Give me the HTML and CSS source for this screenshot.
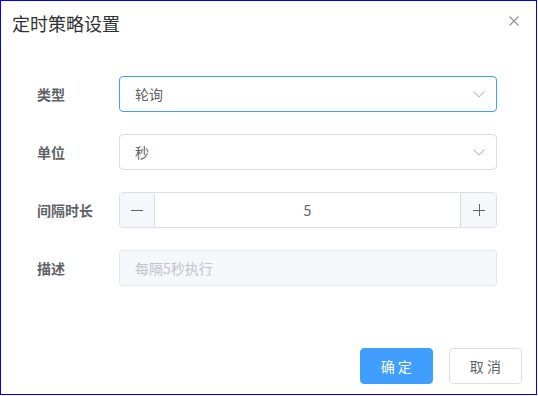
FILE: index.html
```html
<!DOCTYPE html>
<html lang="zh-CN">
<head>
    <meta charset="UTF-8">
    <meta name="viewport" content="width=device-width, initial-scale=1.0">
    <title>定时策略设置</title>
    <link rel="stylesheet" href="styles.css">
</head>
<body>
    <div class="dialog">
        <header class="dialog-header">
            <span class="dialog-title">定时策略设置</span>
            <button class="close-btn" aria-label="关闭">
                <svg width="10" height="10" viewBox="0 0 10 10">
                    <path d="M0.5 0.5 L9.5 9.5 M9.5 0.5 L0.5 9.5" stroke="#909399" stroke-width="1.2" fill="none"/>
                </svg>
            </button>
        </header>

        <div class="form">
            <div class="form-row">
                <label class="form-label">类型</label>
                <div class="select is-focus">
                    <span>轮询</span>
                    <svg class="arrow" width="12" height="7" viewBox="0 0 12 7">
                        <path d="M0.5 0.5 L6 6 L11.5 0.5" stroke="#c0c4cc" stroke-width="1.2" fill="none"/>
                    </svg>
                </div>
            </div>

            <div class="form-row">
                <label class="form-label">单位</label>
                <div class="select">
                    <span>秒</span>
                    <svg class="arrow" width="12" height="7" viewBox="0 0 12 7">
                        <path d="M0.5 0.5 L6 6 L11.5 0.5" stroke="#c0c4cc" stroke-width="1.2" fill="none"/>
                    </svg>
                </div>
            </div>

            <div class="form-row">
                <label class="form-label">间隔时长</label>
                <div class="input-number">
                    <span class="step step-minus">
                        <svg width="12" height="12" viewBox="0 0 12 12">
                            <path d="M0 6.5 H12" stroke="#606266" stroke-width="1"/>
                        </svg>
                    </span>
                    <span class="number-value">5</span>
                    <span class="step step-plus">
                        <svg width="12" height="12" viewBox="0 0 12 12">
                            <path d="M0 6.5 H12 M6.5 0 V12" stroke="#606266" stroke-width="1"/>
                        </svg>
                    </span>
                </div>
            </div>

            <div class="form-row">
                <label class="form-label">描述</label>
                <div class="text-input is-disabled">每隔5秒执行</div>
            </div>
        </div>

        <footer class="dialog-footer">
            <button class="btn btn-primary">确 定</button>
            <button class="btn btn-default">取 消</button>
        </footer>
    </div>
</body>
</html>
```

FILE: styles.css
```css
* {
    margin: 0;
    padding: 0;
    box-sizing: border-box;
    font-family: "Noto Sans CJK SC", "Noto Sans", sans-serif;
}

body {
    background: white;
}

.dialog {
    width: 537px;
    height: 395px;
    border: 1px solid #0000ff;
    display: flex;
    flex-direction: column;
    background: white;
}

.dialog-header {
    display: flex;
    align-items: flex-start;
    justify-content: space-between;
    padding: 10px 17px 0 11px;
}

.dialog-title {
    font-size: 18px;
    line-height: 24px;
    color: #303133;
}

.close-btn {
    background: none;
    border: none;
    margin-top: 5px;
    width: 10px;
    height: 10px;
    display: flex;
    cursor: pointer;
}

.form {
    display: flex;
    flex-direction: column;
    gap: 22px;
    padding: 41px 39px 0 36px;
}

.form-row {
    display: flex;
    align-items: center;
    height: 36px;
}

.form-label {
    width: 82px;
    font-size: 14px;
    font-weight: bold;
    color: #606266;
}

.select,
.text-input {
    flex: 1;
    height: 36px;
    border: 1px solid #dcdfe6;
    border-radius: 4px;
    padding: 0 11px 0 15px;
    display: flex;
    align-items: center;
    justify-content: space-between;
    font-size: 14px;
    color: #606266;
}

.select.is-focus {
    border-color: #409eff;
}

.text-input.is-disabled {
    background: #f5f7fa;
    border-color: #e4e7ed;
    color: #c0c4cc;
}

.input-number {
    flex: 1;
    height: 36px;
    border: 1px solid #dcdfe6;
    border-radius: 4px;
    display: flex;
    overflow: hidden;
}

.step {
    width: 36px;
    background: #f5f7fa;
    display: flex;
    align-items: center;
    justify-content: center;
}

.step-minus {
    width: 35px;
    border-right: 1px solid #dcdfe6;
}

.step-plus {
    border-left: 1px solid #dcdfe6;
}

.number-value {
    flex: 1;
    display: flex;
    align-items: center;
    justify-content: center;
    font-size: 14px;
    color: #606266;
}

.dialog-footer {
    margin-top: auto;
    display: flex;
    justify-content: flex-end;
    gap: 16px;
    padding: 0 14px 10px 0;
}

.btn {
    height: 36px;
    padding: 0 20px;
    border-radius: 4px;
    font-size: 14px;
    cursor: pointer;
}

.btn-primary {
    background: #409eff;
    border: 1px solid #409eff;
    color: white;
}

.btn-default {
    background: white;
    border: 1px solid #dcdfe6;
    color: #606266;
}
```
